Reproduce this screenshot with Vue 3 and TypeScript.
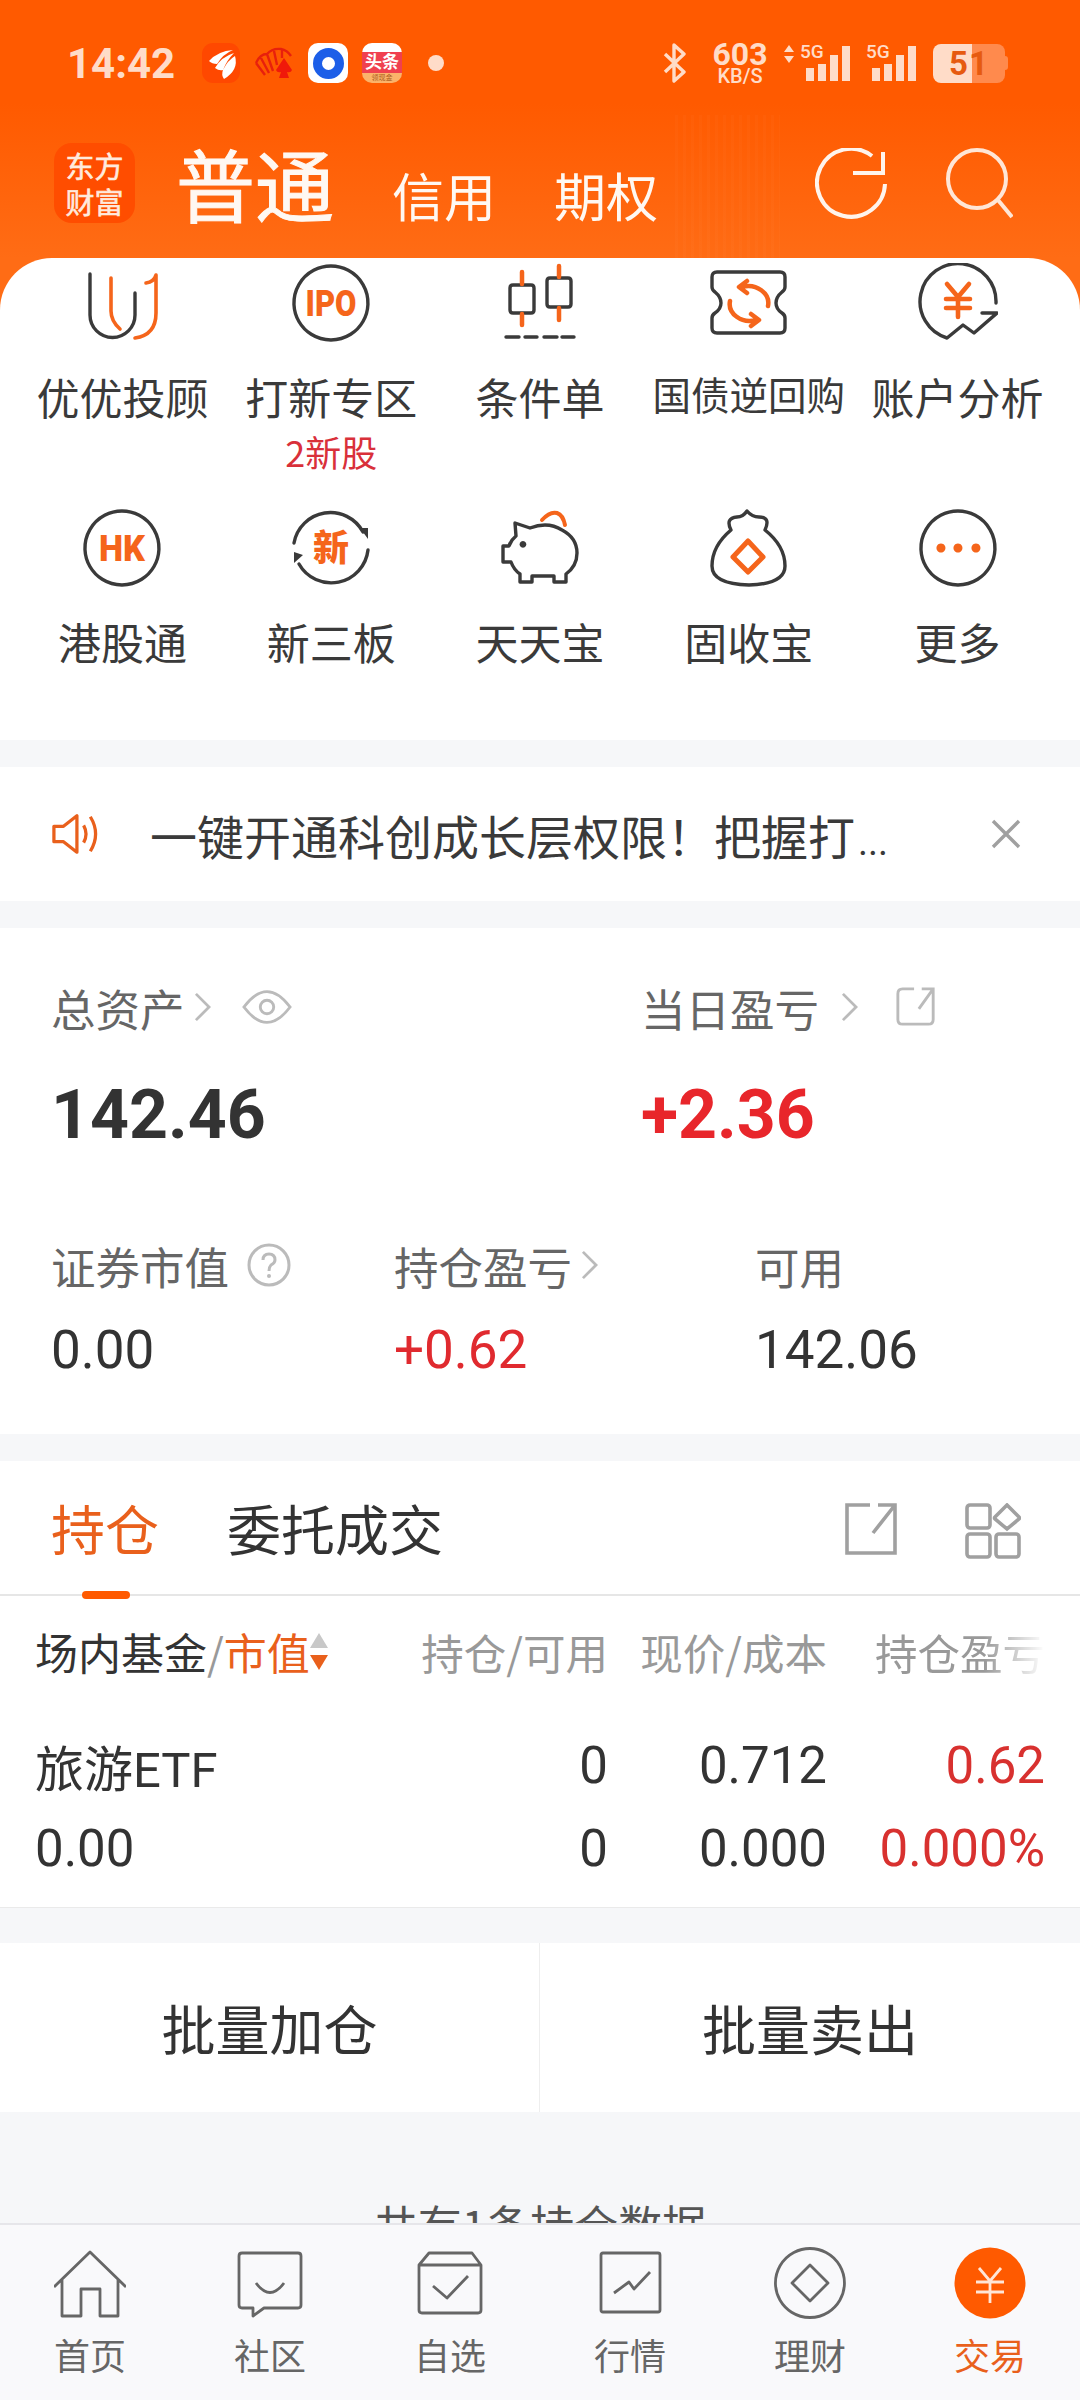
<template>
  <div class="page">
    <div class="scroll">
      <header class="header">
        <div class="status">
          <div class="status-left">
            <span class="time">14:42</span>
            <svg class="app app-feather" viewBox="0 0 38 40">
              <rect width="38" height="40" rx="11" fill="#ff4800" />
              <path d="M7 18Q16 8 31 7Q21 11 15 21Q10 21 7 18ZM13 25Q19 14 32 10Q25 17 21 27Q17 28 13 25ZM22 36Q19 32 21 27Q26 17 33 13Q37 27 22 36Z" fill="#fff" />
            </svg>
            <svg class="app app-fan" viewBox="0 0 40 32">
              <path d="M2 16Q6 7 13 7Q18 1 27 2Q33 3 37 9M2 16L11 28M13 7L19 24M7 11L15 26M20 4L23 18M28 3L28 11" fill="none" stroke="#e8200c" stroke-width="2.4" />
              <path d="M30 11L38 23Q37 26 33 25L35 31H25L27 25Q23 26 22 23Z" fill="#f0190a" />
            </svg>
            <div class="app app-blue"><span class="blue-ring"></span></div>
            <div class="app app-news">
              <span class="news-main">头条</span>
              <span class="news-sub">领现金</span>
            </div>
            <span class="status-dot"></span>
          </div>
          <div class="status-right">
            <svg class="bluetooth" viewBox="0 0 24 40">
              <path d="M2 11L21 29L11 38V2L21 11L2 29" fill="none" stroke="#ffdcc8" stroke-width="3.4" stroke-linejoin="round" />
            </svg>
            <div class="speed">
              <span class="speed-num">603</span>
              <span class="speed-unit">KB/S</span>
            </div>
            <svg class="updown" viewBox="0 0 10 18">
              <path d="M5 0L10 7H0ZM5 18L0 11H10Z" fill="#ffdcc8" />
            </svg>
            <div class="signal">
              <span class="net">5G</span>
              <i v-for="h in barHeights" :key="h" :style="{ height: h + 'px' }"></i>
            </div>
            <div class="signal">
              <span class="net">5G</span>
              <i v-for="h in barHeights" :key="h" :style="{ height: h + 'px' }"></i>
            </div>
            <div class="battery">
              <span class="battery-level">51</span>
            </div>
          </div>
        </div>
        <div class="topbar">
          <div class="logo">
            <span>东方</span>
            <span>财富</span>
          </div>
          <div class="account-tabs">
            <span class="account-tab active">普通</span>
            <span class="account-tab">信用</span>
            <span class="account-tab">期权</span>
          </div>
          <svg class="top-icon refresh" viewBox="0 0 72 72">
            <path d="M57 8A34 34 0 1 0 70 36" fill="none" stroke="#fff4ec" stroke-width="4" />
            <path d="M68 4V25H38" fill="none" stroke="#fff4ec" stroke-width="4" />
          </svg>
          <svg class="top-icon search" viewBox="0 0 72 72">
            <circle cx="36" cy="31" r="29" fill="none" stroke="#ffe6d6" stroke-width="4" />
            <path d="M57 52L71 69" fill="none" stroke="#ffe6d6" stroke-width="4" />
          </svg>
        </div>
        <div class="watermark"></div>
      </header>

      <div class="menu-wrap">
        <section class="menu">
          <div v-for="item in menuItems" :key="item.label" class="menu-item">
            <svg class="menu-icon" viewBox="0 0 80 80">
              <path :d="item.dark" fill="none" stroke="#3a3a3a" stroke-width="3.4" stroke-linecap="round" stroke-linejoin="round" />
              <path v-if="item.accent" :d="item.accent" fill="none" stroke="#f5651b" :stroke-width="item.accentWidth || 3.6" stroke-linecap="round" stroke-linejoin="round" />
              <path v-if="item.fill" :d="item.fill" :fill="item.fillColor || '#3a3a3a'" />
              <text
                v-if="item.text"
                x="40"
                :y="item.textY"
                text-anchor="middle"
                class="menu-icon-text"
                :textLength="item.textWidth"
                :lengthAdjust="item.textWidth ? 'spacingAndGlyphs' : undefined"
                :style="{ fontSize: item.textSize + 'px' }"
              >{{ item.text }}</text>
            </svg>
            <span class="menu-label" :class="{ small: item.small }">{{ item.label }}</span>
            <span v-if="item.sub" class="menu-sub">{{ item.sub }}</span>
          </div>
        </section>
      </div>

      <section class="notice">
        <svg class="notice-icon" viewBox="0 0 48 44">
          <path d="M2 14H12L26 3V41L12 30H2Z" fill="none" stroke="#e9601c" stroke-width="3.4" stroke-linejoin="round" />
          <path d="M33 13Q38 22 33 31M40 4Q51 22 40 40" fill="none" stroke="#e9601c" stroke-width="3.4" />
        </svg>
        <span class="notice-text">一键开通科创成长层权限！把握打<span class="dots">...</span></span>
        <svg class="notice-close" viewBox="0 0 30 30">
          <path d="M2 2L28 28M28 2L2 28" stroke="#a0a0a0" stroke-width="3.4" />
        </svg>
      </section>

      <section class="assets">
        <div class="assets-main">
          <div class="asset-block">
            <div class="asset-label">
              <span>总资产</span>
              <svg class="chevron" viewBox="0 0 18 32"><path d="M2 2L16 16L2 30" /></svg>
              <svg class="eye" viewBox="0 0 52 36">
                <path d="M2 18Q14 2 26 2Q38 2 50 18Q38 34 26 34Q14 34 2 18Z" />
                <circle cx="26" cy="18" r="7" />
              </svg>
            </div>
            <div class="asset-big">142.46</div>
          </div>
          <div class="asset-block">
            <div class="asset-label">
              <span>当日盈亏</span>
              <svg class="chevron wide" viewBox="0 0 18 32"><path d="M2 2L16 16L2 30" /></svg>
              <svg class="share-small" viewBox="0 0 44 44">
                <path d="M20 3H8Q3 3 3 8V35Q3 40 8 40H35Q40 40 40 35V3H28M40 3L25 24" />
              </svg>
            </div>
            <div class="asset-big red">+2.36</div>
          </div>
        </div>
        <div class="assets-sub">
          <div class="asset-block">
            <div class="asset-label">
              <span>证券市值</span>
              <svg class="help" viewBox="0 0 44 44">
                <circle cx="22" cy="22" r="20" />
                <path d="M16 17Q16 11 22 11Q28 11 28 17Q28 20 24 22Q22 24 22 28" />
                <circle class="help-dot" cx="22" cy="33" r="2" />
              </svg>
            </div>
            <div class="asset-num">0.00</div>
          </div>
          <div class="asset-block">
            <div class="asset-label">
              <span>持仓盈亏</span>
              <svg class="chevron" viewBox="0 0 18 32"><path d="M2 2L16 16L2 30" /></svg>
            </div>
            <div class="asset-num red">+0.62</div>
          </div>
          <div class="asset-block">
            <div class="asset-label"><span>可用</span></div>
            <div class="asset-num">142.06</div>
          </div>
        </div>
      </section>

      <section class="holdings">
        <div class="tabs">
          <span class="tab active">持仓</span>
          <span class="tab">委托成交</span>
          <svg class="tabs-icon share-big" viewBox="0 0 54 54">
            <path d="M26 3H3V51H51V3H34M51 3L29 31" />
          </svg>
          <svg class="tabs-icon grid-icon" viewBox="0 0 56 56">
            <rect x="2" y="2" width="23" height="23" rx="3" />
            <path d="M42 2L54 14Q55 15 54 16L42 26L30 16Q29 15 30 14Z" />
            <rect x="2" y="31" width="23" height="23" rx="3" />
            <rect x="31" y="31" width="23" height="23" rx="3" />
          </svg>
        </div>
        <div class="table-head table-grid">
          <div class="head-first">
            <span>场内基金</span><span class="slash">/</span><span class="orange">市值</span>
            <span class="sort">
              <i class="sort-up"></i>
              <i class="sort-down"></i>
            </span>
          </div>
          <div class="head-cell">持仓/可用</div>
          <div class="head-cell">现价/成本</div>
          <div class="head-cell fade">持仓盈亏</div>
        </div>
        <div class="table-row table-grid">
          <div class="stock-name">旅游ETF</div>
          <div class="num">0</div>
          <div class="num">0.712</div>
          <div class="num red2">0.62</div>
          <div>0.00</div>
          <div class="num">0</div>
          <div class="num">0.000</div>
          <div class="num red2">0.000%</div>
        </div>
      </section>

      <section class="actions">
        <div class="action">批量加仓</div>
        <div class="action">批量卖出</div>
      </section>

      <p class="count">共有1条持仓数据</p>
    </div>

    <nav class="nav">
      <div v-for="tab in navItems" :key="tab.label" class="nav-item" :class="{ active: tab.active }">
        <svg class="nav-icon" viewBox="0 0 72 72">
          <circle v-if="tab.active" cx="36" cy="36" r="35.5" fill="#ff5a00" />
          <path :d="tab.d" fill="none" :stroke="tab.active ? '#ffe6d6' : '#666'" stroke-width="2.8" stroke-linejoin="round" />
        </svg>
        <span>{{ tab.label }}</span>
      </div>
    </nav>
  </div>
</template>

<script setup lang="ts">
interface MenuItem {
  label: string;
  dark: string;
  accent?: string;
  accentWidth?: number;
  fill?: string;
  fillColor?: string;
  text?: string;
  textY?: number;
  textSize?: number;
  textWidth?: number;
  sub?: string;
  small?: boolean;
}

const ring = "M40 3A37 37 0 1 1 39.9 3Z";
const barHeights = [13, 17, 26, 35];

const menuItems: MenuItem[] = [
  {
    label: "优优投顾",
    dark: "M8 11V52A22.5 22.5 0 0 0 53 52V30",
    accent: "M29 15V48Q29 58 38 66M64 20Q72 19 74 12V50Q74 72 53 75",
  },
  { label: "打新专区", sub: "2新股", dark: ring, text: "IPO", textY: 53, textSize: 36, textWidth: 51 },
  {
    label: "条件单",
    dark: "M13 22H31Q34 22 34 25V47Q34 50 31 50H13Q10 50 10 47V25Q10 22 13 22ZM50 15H68Q71 15 71 18V41Q71 44 68 44H50Q47 44 47 41V18Q47 15 50 15ZM6 74H19M25 74H37M44 74H57M62 74H74",
    accent: "M22 9V21M22 51V62M59 3V14M59 45V57",
    accentWidth: 4.5,
  },
  {
    label: "国债逆回购",
    small: true,
    dark: "M8 9H71Q76 9 76 14V24Q76 27 73 29Q67 34 67 40Q67 46 73 50Q76 52 76 55V65Q76 70 71 70H8Q3 70 3 65V55Q3 52 6 50Q12 46 12 40Q12 34 6 29Q3 27 3 24V14Q3 9 8 9Z",
    accent: "M33 24A20 17 0 0 1 59 43M38 18L30 24L38 30M47 57A20 17 0 0 1 21 38M42 51L50 57L42 63",
    accentWidth: 4.5,
  },
  {
    label: "账户分析",
    dark: "M78 40A38 38 0 1 0 29 75L45 62L56 70L79 50H64",
    accent: "M29 21L40 34L51 21M28 36H52M28 45H52M40 34V54",
    accentWidth: 4.6,
  },
  { label: "港股通", dark: ring, text: "HK", textY: 53, textSize: 37, textWidth: 46 },
  {
    label: "新三板",
    dark: "M3 35A37 37 0 0 1 72 24M77 42A37 37 0 0 1 8 56",
    fill: "M69 20L77 20L77 31ZM3 55L3 44L12 47Z",
    text: "新",
    textY: 53,
    textSize: 36,
  },
  {
    label: "天天宝",
    dark: "M15 15L30 20Q48 13 62 22Q77 30 77 45Q77 58 66 66V74H54V68H32V74H20V66Q14 62 11 54H3V38H9Q11 32 16 28Z",
    accent: "M42 12Q50 3 57 5Q63 7 65 17",
    accentWidth: 4,
    fill: "M23 33A3.4 3.4 0 1 1 22.9 33Z",
  },
  {
    label: "固收宝",
    dark: "M22 22Q16 10 28 9Q34 9 38 3Q43 9 50 9Q62 9 56 22Q76 38 76 58Q76 76 40 77Q3 76 3 58Q3 38 22 22Z",
    accent: "M39 33L54 49L39 64L24 49Z",
    accentWidth: 5,
  },
  {
    label: "更多",
    dark: ring,
    fill: "M23 35.5A4.5 4.5 0 1 1 22.9 35.5ZM40 35.5A4.5 4.5 0 1 1 39.9 35.5ZM58 35.5A4.5 4.5 0 1 1 57.9 35.5Z",
    fillColor: "#f5651b",
  },
];

const navItems = [
  {
    label: "首页",
    d: "M0 40L36 5L72 40M8 32V69H27V42H46V69H64V32",
  },
  {
    label: "社区",
    d: "M8 6H64Q67 6 67 9V58Q67 61 64 61H30L19 69V61H8Q5 61 5 58V9Q5 6 8 6ZM22 36Q36 55 50 36",
  },
  {
    label: "自选",
    d: "M5 18L15 6H58L67 18V63Q67 66 64 66H8Q5 66 5 63ZM5 18H67M19 39L33 51L54 29",
  },
  {
    label: "行情",
    d: "M9 6H64Q66 6 66 8V63Q66 65 64 65H9Q7 65 7 63V8Q7 6 9 6ZM20 46L35 35L40 42L56 25",
  },
  {
    label: "理财",
    d: "M36 1.5A34.5 34.5 0 1 1 35.9 1.5ZM36 18L54 36L36 54L18 36Z",
  },
  {
    label: "交易",
    active: true,
    d: "M25 21L36 34L47 21M22 35H50M22 45H50M36 34V56",
  },
];
</script>

<style>
html,
body {
  margin: 0;
  background: #f6f6f8;
}
</style>

<style scoped>
.page {
  width: 1080px;
  height: 2400px;
  display: flex;
  flex-direction: column;
  overflow: hidden;
  background: #f6f7f9;
  color: #333;
  font-family: "Noto Sans CJK SC", Roboto, sans-serif;
}

.scroll {
  flex: 1;
  min-height: 0;
  overflow: hidden;
}

.header {
  position: relative;
  height: 258px;
  box-sizing: border-box;
  background: linear-gradient(180deg, #ff5a00 0%, #ff5a00 40%, #ff6c15 100%);
  display: flex;
  flex-direction: column;
}

.watermark {
  position: absolute;
  left: 675px;
  top: 115px;
  width: 105px;
  height: 143px;
  background: repeating-linear-gradient(90deg, rgba(255, 255, 255, 0.018) 0 3px, transparent 3px 8px);
}

.status {
  display: flex;
  justify-content: space-between;
  align-items: center;
  height: 42px;
  padding: 42px 75px 0 67px;
  color: #ffdcc8;
}

.status-left {
  display: flex;
  align-items: center;
}

.time {
  width: 135px;
  font-family: Roboto, sans-serif;
  font-size: 42px;
  font-weight: 700;
}

.app {
  flex: none;
  height: 40px;
  width: 40px;
}

.app-feather {
  width: 38px;
}

.app-fan {
  width: 40px;
  height: 32px;
  margin-left: 14px;
}

.app-blue {
  margin-left: 14px;
  background: #fff;
  border-radius: 10px;
  display: flex;
  align-items: center;
  justify-content: center;
}

.blue-ring {
  width: 13px;
  height: 13px;
  border: 9px solid #1c5ee8;
  border-radius: 50%;
}

.app-news {
  margin-left: 14px;
  border-radius: 10px;
  background: linear-gradient(180deg, #fff 0%, #fff 22%, #f0404f 22%, #f0404f 74%, #fbb36a 74%);
  display: flex;
  flex-direction: column;
  align-items: center;
  color: #fff;
  overflow: hidden;
}

.news-main {
  font-size: 17px;
  font-weight: 700;
  line-height: 18px;
  margin-top: 9px;
  white-space: nowrap;
}

.news-sub {
  font-size: 7px;
  line-height: 9px;
  margin-top: 3px;
  color: #a85b1d;
}

.status-dot {
  width: 16px;
  height: 16px;
  margin-left: 26px;
  border-radius: 50%;
  background: #ffdcc8;
}

.status-right {
  display: flex;
  align-items: center;
}

.bluetooth {
  width: 24px;
  height: 40px;
}

.speed {
  width: 58px;
  margin-left: 24px;
  display: flex;
  flex-direction: column;
  align-items: center;
  gap: 3px;
  font-family: Roboto, sans-serif;
  font-weight: 700;
}

.speed-num {
  font-size: 32px;
  line-height: 24px;
}

.speed-unit {
  font-size: 20px;
  line-height: 15px;
  font-weight: 500;
}

.updown {
  width: 10px;
  height: 18px;
  margin: -18px 0 0 15px;
  flex: none;
}

.signal {
  position: relative;
  display: flex;
  align-items: flex-end;
  gap: 4px;
  height: 36px;
  margin-left: 12px;
}

.signal + .signal {
  margin-left: 22px;
}

.signal i {
  width: 8px;
  background: #ffdcc8;
}

.net {
  position: absolute;
  left: -6px;
  top: -3px;
  font-family: Roboto, sans-serif;
  font-size: 19px;
  font-weight: 500;
  line-height: 20px;
}

.battery {
  width: 72px;
  height: 39px;
  margin-left: 17px;
  border-radius: 8px;
  background: linear-gradient(90deg, #ffdcc8 54%, #ff8a4d 54%);
  display: flex;
  align-items: center;
  justify-content: center;
  font-family: Roboto, sans-serif;
  font-size: 33px;
  font-weight: 700;
  color: #e65a10;
  position: relative;
}

.battery::after {
  content: "";
  position: absolute;
  right: -3px;
  top: 12px;
  width: 3px;
  height: 14px;
  background: #ff8a4d;
  border-radius: 0 3px 3px 0;
}

.battery-level {
  letter-spacing: 1px;
}

.topbar {
  display: flex;
  align-items: flex-start;
  margin-top: 59px;
  padding: 0 67px 0 54px;
}

.logo {
  width: 81px;
  height: 80px;
  flex: none;
  box-sizing: border-box;
  padding-top: 4px;
  border-radius: 18px;
  background: #ff4d00;
  color: #ffeadd;
  display: flex;
  flex-direction: column;
  align-items: center;
  font-size: 29px;
  line-height: 36px;
  -webkit-text-stroke: 0.6px #ffeadd;
}

.account-tabs {
  display: flex;
  align-items: baseline;
  margin-left: 41px;
  height: 80px;
  color: #fff8f2;
}

.account-tab {
  font-size: 52px;
  line-height: 80px;
  margin-left: 58px;
}

.account-tab.active {
  font-size: 79px;
  margin-left: 0;
  -webkit-text-stroke: 1px #fff8f2;
}

.top-icon {
  width: 72px;
  height: 72px;
  flex: none;
}

.refresh {
  margin: 5px 0 0 auto;
}

.search {
  margin: 5px 0 0 54px;
}

.menu-wrap {
  background: #ff6c15;
}

.menu {
  display: grid;
  grid-template-columns: repeat(5, 1fr);
  grid-template-rows: 245px 237px;
  box-sizing: border-box;
  height: 482px;
  padding: 0 18px;
  border-radius: 52px 52px 0 0;
  background: #fff;
}

.menu-item {
  display: flex;
  flex-direction: column;
  align-items: center;
  padding-top: 5px;
}

.menu-icon {
  width: 80px;
  height: 80px;
  flex: none;
}

.menu-icon-text {
  fill: #f5651b;
  font-family: Roboto, "Noto Sans CJK SC", sans-serif;
  font-weight: 900;
}

.menu-label {
  margin-top: 22px;
  font-size: 43px;
  line-height: 62px;
  white-space: nowrap;
  color: #3a3a3a;
}

.menu-label.small {
  margin-top: 19px;
  font-size: 38.5px;
}

.menu-sub {
  margin-top: 1px;
  font-size: 36px;
  line-height: 46px;
  color: #d9303a;
}

.notice {
  margin-top: 27px;
  height: 134px;
  display: flex;
  align-items: center;
  padding: 0 59px 0 52px;
  background: #fff;
}

.notice-icon {
  width: 46px;
  height: 44px;
  flex: none;
}

.notice-text {
  margin-left: 52px;
  font-size: 47px;
  color: #3a3a3a;
  white-space: nowrap;
}

.dots {
  margin-left: 3px;
  font-family: Roboto, sans-serif;
  font-size: 38px;
}

.notice-close {
  width: 30px;
  height: 30px;
  flex: none;
  margin-left: auto;
}

.assets {
  margin-top: 27px;
  height: 506px;
  box-sizing: border-box;
  padding: 48px 0 0 51px;
  background: #fff;
}

.assets-main {
  display: grid;
  grid-template-columns: 590px 1fr;
}

.assets-sub {
  display: grid;
  grid-template-columns: 343px 361px 1fr;
  margin-top: 79px;
}

.asset-label {
  display: flex;
  align-items: center;
  height: 62px;
  font-size: 44.5px;
  color: #666;
}

.asset-label svg {
  fill: none;
  stroke: #bbb;
  stroke-width: 3;
  flex: none;
}

.chevron {
  width: 17px;
  height: 30px;
  margin-left: 9px;
}

.chevron.wide {
  margin-left: 22px;
}

.eye {
  width: 50px;
  height: 36px;
  margin-left: 31px;
}

.share-small {
  width: 42px;
  height: 42px;
  margin-left: 37px;
}

.help {
  width: 44px;
  height: 44px;
  margin-left: 18px;
}

.asset-label .help-dot {
  fill: #bbb;
  stroke: none;
}

.asset-big {
  margin-top: 37px;
  font-family: Roboto, sans-serif;
  font-size: 68px;
  font-weight: 700;
  line-height: 80px;
  color: #333;
}

.asset-num {
  margin-top: 24px;
  font-family: Roboto, sans-serif;
  font-size: 53px;
  line-height: 60px;
  color: #333;
}

.asset-big.red {
  color: #e8262b;
}

.asset-num.red {
  color: #e02a2f;
}

.holdings {
  margin-top: 27px;
  height: 447px;
  box-sizing: border-box;
  background: #fff;
  border-bottom: 1px solid #eaeaea;
}

.tabs {
  position: relative;
  height: 135px;
  box-sizing: border-box;
  display: flex;
  align-items: center;
  padding-left: 51px;
  border-bottom: 2px solid #e6e6e6;
}

.tab {
  font-size: 54px;
  color: #333;
  margin-right: 68px;
  position: relative;
}

.tab.active {
  color: #e9601c;
}

.tab.active::after {
  content: "";
  position: absolute;
  left: 31px;
  bottom: -32px;
  width: 48px;
  height: 8px;
  border-radius: 4px;
  background: #ff5a00;
}

.tabs-icon {
  position: absolute;
  fill: none;
  stroke: #a0a0a0;
  stroke-width: 3.6;
}

.share-big {
  left: 844px;
  top: 41px;
  width: 54px;
  height: 54px;
}

.grid-icon {
  left: 965px;
  top: 42px;
  width: 56px;
  height: 56px;
}

.table-grid {
  display: grid;
  grid-template-columns: 340px 233px 219px 218px;
  padding: 0 35px;
}

.table-head {
  height: 110px;
  align-items: center;
  font-size: 43px;
  color: #999;
}

.head-first {
  display: flex;
  align-items: center;
  color: #333;
  white-space: nowrap;
}

.slash {
  color: #999;
}

.orange {
  color: #e9601c;
}

.sort {
  display: flex;
  flex-direction: column;
  gap: 7px;
}

.sort-up {
  border-left: 9px solid transparent;
  border-right: 9px solid transparent;
  border-bottom: 15px solid #c8c8c8;
}

.sort-down {
  border-left: 9px solid transparent;
  border-right: 9px solid transparent;
  border-top: 15px solid #e9601c;
}

.head-cell {
  text-align: right;
  white-space: nowrap;
  font-size: 42.5px;
}

.head-cell.fade {
  -webkit-mask-image: linear-gradient(90deg, #000 72%, transparent 100%);
  mask-image: linear-gradient(90deg, #000 72%, transparent 100%);
}

.table-row {
  grid-auto-rows: 83px;
  align-items: center;
  padding-top: 18px;
  font-family: Roboto, "Noto Sans CJK SC", sans-serif;
  font-size: 51px;
  color: #333;
}

.stock-name {
  font-size: 49px;
}

.num {
  text-align: right;
}

.red2 {
  color: #d8312f;
}

.actions {
  margin-top: 35px;
  height: 169px;
  display: grid;
  grid-template-columns: 1fr 1fr;
  background: #fff;
}

.action {
  display: flex;
  align-items: center;
  justify-content: center;
  font-size: 54px;
  color: #333;
}

.action:first-child {
  border-right: 1px solid #eee;
}

.count {
  margin: 84px 0 0;
  text-align: center;
  font-size: 44px;
  line-height: 56px;
  color: #555;
}

.nav {
  flex: none;
  height: 177px;
  box-sizing: border-box;
  display: grid;
  grid-template-columns: repeat(6, 1fr);
  border-top: 2px solid #e6e6ea;
  background: #f9f9fb;
}

.nav-item {
  display: flex;
  flex-direction: column;
  align-items: center;
  padding-top: 22px;
  font-size: 36px;
  line-height: 50px;
  color: #666;
}

.nav-item.active {
  color: #e9601c;
}

.nav-icon {
  width: 72px;
  height: 72px;
  margin-bottom: 10px;
}
</style>
